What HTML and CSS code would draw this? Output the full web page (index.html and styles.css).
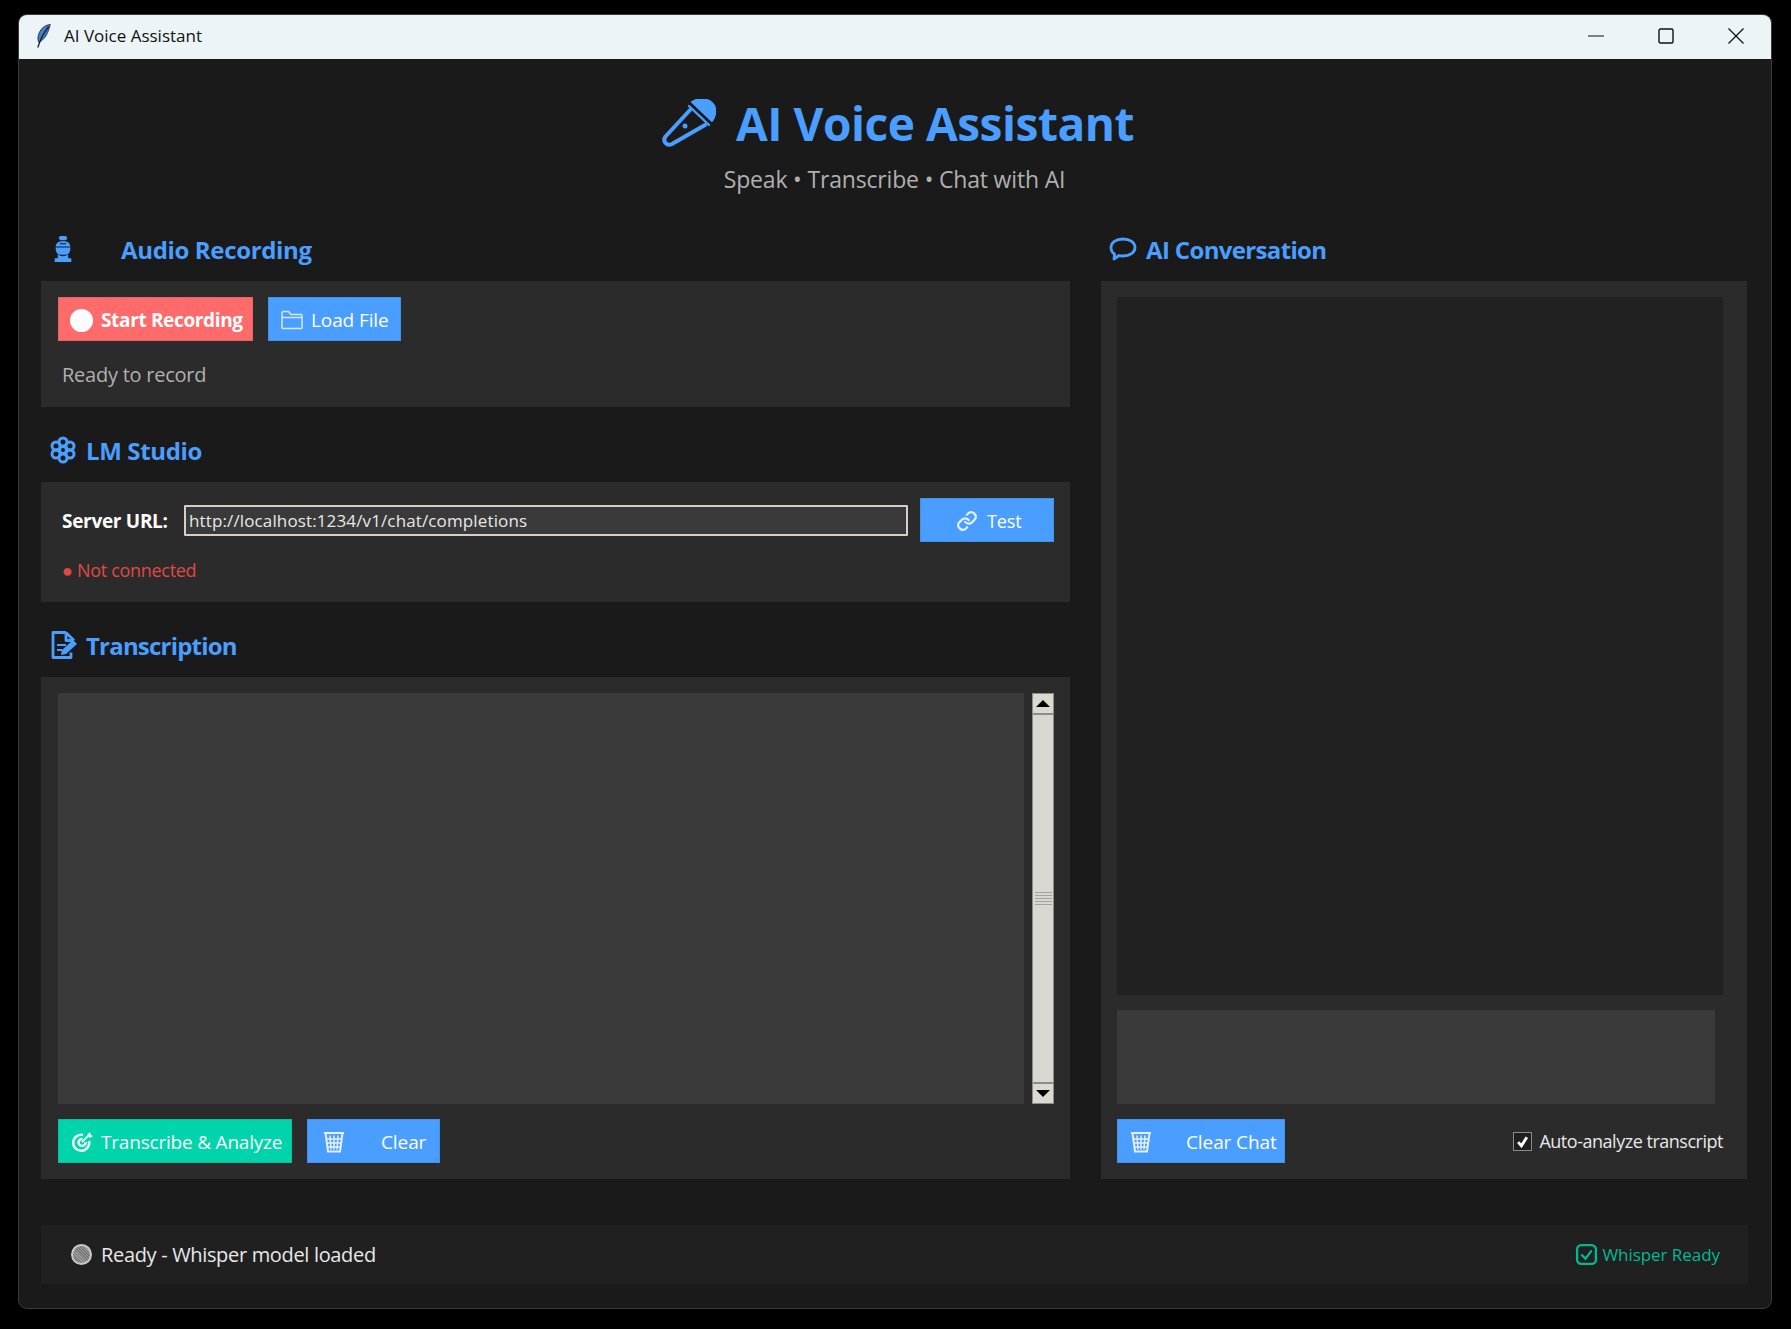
FILE: index.html
```html
<!DOCTYPE html>
<html lang="en">
<head>
  <meta charset="UTF-8" />
  <title>AI Voice Assistant</title>
  <link rel="stylesheet" href="styles.css">
</head>
<body>
  <div class="window">
    <div class="titlebar">
      <svg class="feather" viewBox="0 0 14 23">
        <path d="M13.500 .5C8 1 3.500 5 2 11c-.6 2.500-.4 4.500 .5 6.500C6 16 9 13 11 8c1-2.500 2-5 2.500-7.500z" fill="#3f7fc4" stroke="#1c2a38" stroke-width=".8"/>
        <path d="M12 2.500C8 7 5 12 1.500 22.500" fill="none" stroke="#10161c" stroke-width="1.200"/>
      </svg>
      <span class="titlebar-text">AI Voice Assistant</span>
      <div class="window-controls">
        <svg viewBox="0 0 16 16"><path d="M0 8h16" stroke="#111" stroke-width="1.200"/></svg>
        <svg viewBox="0 0 16 16"><rect x="1" y="1" width="14" height="14" rx="1.500" fill="none" stroke="#111" stroke-width="1.400"/></svg>
        <svg viewBox="0 0 16 16"><path d="M.5 .5l15 15M15.500 .5l-15 15" stroke="#111" stroke-width="1.300"/></svg>
      </div>
    </div>

    <div class="content">
      <header class="app-header">
        <h1>
          <svg class="mic-large" viewBox="0 0 54 48" fill="none" stroke="#4a9eff" stroke-width="4" stroke-linejoin="round" stroke-linecap="round">
            <path d="M28 11L3.500 37.500Q1 41 3.500 44T10 45L43 26"/>
            <path d="M27 7L47 26" stroke-width="2.400"/>
            <path d="M30 3C36-1 45-1 50 4S54 16 50 22z" fill="#4a9eff" stroke-width="2"/>
            <circle cx="23" cy="27" r="2.500" fill="#4a9eff" stroke="none"/>
          </svg>
          <span>AI Voice Assistant</span>
        </h1>
        <p class="subtitle">Speak • Transcribe • Chat with AI</p>
      </header>

      <div class="columns">
        <div class="col-left">
          <h2 class="section-title title-audio">
            <svg class="icon-audio" viewBox="0 0 18 25">
              <rect x="5" y="0" width="8" height="4" rx="2" fill="#4a9eff"/>
              <rect x="2" y="5" width="14" height="13" rx="5" fill="#4a9eff"/>
              <path d="M2 10.500h14M6 7.500h6" stroke="#1a1a1a" stroke-width="1"/>
              <path d="M4 17.500q5 4 10 0v4h3v3.500H1v-3.500h3z" fill="#4a9eff"/>
            </svg>
            <span>Audio Recording</span>
          </h2>
          <section class="panel">
            <div class="button-row">
              <button class="btn btn-red">
                <span class="rec-dot"></span>
                <span>Start Recording</span>
              </button>
              <button class="btn btn-blue btn-load">
                <svg class="btn-icon" viewBox="0 0 22 20" fill="none" stroke="#d5e8ff" stroke-width="1.500"><path d="M1 3a1.500 1.500 0 0 1 1.500-1.500h5L10 4.500h9.500A1.500 1.500 0 0 1 21 6v11.500a1 1 0 0 1-1 1H2a1 1 0 0 1-1-1z M1 7.500h20"/></svg>
                <span>Load File</span>
              </button>
            </div>
            <p class="muted-line">Ready to record</p>
          </section>

          <h2 class="section-title title-next">
            <svg class="icon-title" viewBox="0 0 28 28" fill="none" stroke="#4a9eff" stroke-width="3">
              <circle cx="14" cy="6" r="4"/><circle cx="14" cy="22" r="4"/>
              <circle cx="7" cy="10" r="4"/><circle cx="21" cy="10" r="4"/>
              <circle cx="7" cy="18" r="4"/><circle cx="21" cy="18" r="4"/>
              <circle cx="14" cy="14" r="3.500"/>
            </svg>
            <span>LM Studio</span>
          </h2>
          <section class="panel panel-lm">
            <div class="url-row">
              <label class="url-label" for="serverUrl">Server URL:</label>
              <input class="url-input" id="serverUrl" type="text" value="http://localhost:1234/v1/chat/completions" readonly />
              <button class="btn btn-blue btn-test">
                <svg class="btn-icon" viewBox="0 0 24 24" fill="none" stroke="#e3f0ff" stroke-width="2.400" stroke-linecap="round"><path d="M10 13a5 5 0 0 0 7.500 .5l3-3a5 5 0 0 0-7-7l-1.700 1.700"/><path d="M14 11a5 5 0 0 0-7.500-.5l-3 3a5 5 0 0 0 7 7l1.700-1.700"/></svg>
                <span>Test</span>
              </button>
            </div>
            <p class="conn-line">● Not connected</p>
          </section>

          <h2 class="section-title title-next title-doc">
            <svg class="icon-title icon-doc" viewBox="0 0 26 28" fill="none" stroke="#4a9eff" stroke-width="2.800" stroke-linejoin="round">
              <path d="M15 1.500H2v25h18v-5M15 1.500l8 8M15 1.500v8h8" />
              <path d="M6 14h9M6 19h5" stroke-width="2.200"/>
              <path d="M10 24l1-5 11-10 4 4-11 10z" fill="#4a9eff" stroke="none"/>
            </svg>
            <span>Transcription</span>
          </h2>
          <section class="panel panel-grow">
            <div class="text-wrap">
              <textarea class="text-area" aria-label="Transcription"></textarea>
              <div class="scrollbar">
                <div class="scroll-btn"><span class="arrow-up"></span></div>
                <div class="scroll-thumb"><span class="grip"></span></div>
                <div class="scroll-btn"><span class="arrow-down"></span></div>
              </div>
            </div>
            <div class="button-row row-bottom">
              <button class="btn btn-green">
                <svg class="btn-icon" viewBox="0 0 22 22" fill="none" stroke="#e6fbf5" stroke-width="2.600"><path d="M12 4a8 8 0 1 0 6 6"/><path d="M11.500 8a3.500 3.500 0 1 0 3 3"/><path d="M11 11l7-7" stroke-width="1.800"/><path d="M16 4l3-3 1 3 2 1-3 2z" fill="#e6fbf5" stroke="none"/></svg>
                <span>Transcribe &amp; Analyze</span>
              </button>
              <button class="btn btn-blue btn-clear">
                <svg class="trash" viewBox="0 0 22 22" fill="none" stroke="#e3efff" stroke-width="1.500"><path d="M1 2h20M2.500 2l2.500 18.500h12L19.500 2" stroke-width="2"/><path d="M7 4.500l1 14M11 4.500v14M15 4.500l-1 14M3.500 8h15M4 12h14M4.500 16h13"/></svg>
                <span>Clear</span>
              </button>
            </div>
          </section>
        </div>

        <div class="col-right">
          <h2 class="section-title title-chat">
            <svg class="icon-chat" viewBox="0 0 28 24" fill="none" stroke="#4a9eff" stroke-width="2.800" stroke-linejoin="round"><path d="M14 2c7 0 12 3.500 12 8.500S21 19 14 19c-1.500 0-3 0-4-.5L5 22l.5-5C3 15.500 2 13 2 10.500 2 5.500 7 2 14 2z"/></svg>
            <span>AI Conversation</span>
          </h2>
          <section class="panel panel-grow panel-chat">
            <div class="chat-log"></div>
            <textarea class="chat-entry" aria-label="Message"></textarea>
            <div class="chat-footer">
              <button class="btn btn-blue btn-clear-chat">
                <svg class="trash" viewBox="0 0 22 22" fill="none" stroke="#e3efff" stroke-width="1.500"><path d="M1 2h20M2.500 2l2.500 18.500h12L19.500 2" stroke-width="2"/><path d="M7 4.500l1 14M11 4.500v14M15 4.500l-1 14M3.500 8h15M4 12h14M4.500 16h13"/></svg>
                <span>Clear Chat</span>
              </button>
              <label class="check-label">
                <span class="check-box">
                  <svg viewBox="0 0 12 12" fill="none" stroke="#fff" stroke-width="2.600"><path d="M2 6.500l3 3.500 5-8"/></svg>
                </span>
                <span>Auto-analyze transcript</span>
              </label>
            </div>
          </section>
        </div>
      </div>

      <footer class="status-bar">
        <div class="status-left">
          <span class="status-dot"></span>
          <span>Ready - Whisper model loaded</span>
        </div>
        <div class="status-right">
          <svg class="icon-check" viewBox="0 0 22 22" fill="none" stroke="#00b894" stroke-width="2.200"><rect x="2" y="2" width="18" height="18" rx="4"/><path d="M6 11l4 4 6-8"/></svg>
          <span>Whisper Ready</span>
        </div>
      </footer>
    </div>
  </div>
</body>
</html>
```

FILE: styles.css
```css
* {
  box-sizing: border-box;
}
body {
  font-family: "Open Sans", "Noto Sans", sans-serif;
  background: #000;
  margin: 0;
  height: 1329px;
  padding: 14px 19px 20px 18px;
  overflow: hidden;
}
h1, h2, p {
  margin: 0;
}
.window {
  height: 100%;
  display: flex;
  flex-direction: column;
  border: 1px solid #3a3a3a;
  border-radius: 9px;
  overflow: hidden;
  background: #1a1a1a;
}
.titlebar {
  height: 44px;
  flex: none;
  background: #ecf4f8;
  display: flex;
  align-items: center;
  padding: 0 0 3px 17px;
  color: #111;
}
.feather {
  width: 15px;
  height: 24px;
}
.titlebar-text {
  margin-left: 13px;
  font-size: 17px;
}
.window-controls {
  margin-left: auto;
  display: flex;
  gap: 54px;
  padding-right: 27px;
}
.window-controls svg {
  width: 16px;
  height: 16px;
}
.content {
  flex: 1;
  display: flex;
  flex-direction: column;
  padding: 0 23px 24px 22px;
  min-height: 0;
}
.app-header {
  height: 173px;
  flex: none;
  display: flex;
  flex-direction: column;
  align-items: center;
  padding-top: 38px;
}
.app-header h1 {
  display: flex;
  align-items: center;
  gap: 20px;
  padding-left: 7px;
  color: #4a9eff;
  font-size: 46px;
  line-height: 52px;
  letter-spacing: -0.47px;
  font-weight: 700;
}
.mic-large {
  width: 54px;
  height: 48px;
}
.subtitle {
  margin-top: 15px;
  color: #b0b0b0;
  font-size: 23px;
  line-height: 30px;
  letter-spacing: -0.17px;
}
.columns {
  flex: 1;
  display: grid;
  grid-template-columns: 1029px 646px;
  gap: 31px;
  min-height: 0;
}
.col-left, .col-right {
  display: flex;
  flex-direction: column;
  min-height: 0;
}
.section-title {
  height: 36px;
  flex: none;
  margin-bottom: 13px;
  padding-bottom: 2px;
  display: flex;
  align-items: center;
  color: #4a9eff;
  font-size: 24px;
  letter-spacing: -0.35px;
  font-weight: 700;
}
.title-audio {
  padding-left: 12px;
  gap: 48px;
}
.title-next {
  margin-top: 26px;
  padding-left: 8px;
  gap: 9px;
}
.title-doc {
  padding-left: 10px;
  gap: 9px;
  letter-spacing: -0.8px;
}
.title-chat {
  padding-left: 8px;
  gap: 9px;
  letter-spacing: -0.65px;
}
.icon-audio {
  width: 20px;
  height: 26px;
}
.icon-title {
  width: 28px;
  height: 28px;
}
.icon-doc {
  width: 26px;
}
.icon-chat {
  width: 28px;
  height: 24px;
}
.panel {
  background: #2b2b2b;
  padding: 16px 16px 17px 17px;
  flex: none;
}
.panel-lm {
  padding-bottom: 20px;
}
.panel-grow {
  flex: 1;
  display: flex;
  flex-direction: column;
  min-height: 0;
  padding-bottom: 16px;
}
.panel-chat {
  padding-left: 16px;
}
.button-row {
  display: flex;
  gap: 15px;
}
.btn {
  height: 44px;
  border: 1px solid rgba(0, 0, 0, 0.08);
  display: flex;
  align-items: center;
  color: #fff;
  font-family: inherit;
  font-size: 19px;
  letter-spacing: -0.1px;
  padding: 2px 0 0;
  flex: none;
}
.btn-red {
  background: #ff6b6b;
  width: 195px;
  padding-left: 11px;
  gap: 8px;
  font-weight: 700;
  letter-spacing: -0.35px;
}
.btn-blue {
  background: #4a9eff;
}
.btn-green {
  background: #00d4aa;
  width: 234px;
  padding-left: 12px;
  gap: 8px;
  letter-spacing: -0.2px;
}
.rec-dot {
  width: 23px;
  height: 23px;
  border-radius: 50%;
  background: #fff;
}
.btn-icon {
  width: 22px;
  height: 22px;
}
.btn-load {
  width: 133px;
  padding-left: 12px;
  gap: 8px;
}
.btn-test {
  width: 134px;
  margin-left: 12px;
  padding-left: 35px;
  gap: 9px;
  font-size: 18px;
}
.btn-clear {
  width: 133px;
  padding-left: 15px;
  gap: 36px;
}
.btn-clear-chat {
  width: 168px;
  padding-left: 12px;
  gap: 34px;
}
.trash {
  width: 22px;
  height: 22px;
}
.muted-line {
  margin-top: 19px;
  padding-left: 4px;
  color: #b0b0b0;
  font-size: 20px;
  line-height: 30px;
  letter-spacing: -0.25px;
}
.url-row {
  display: flex;
  align-items: center;
}
.url-label {
  padding: 2px 0 0 4px;
  width: 126px;
  color: #fff;
  font-size: 19px;
  font-weight: 700;
  letter-spacing: -0.3px;
}
.url-input {
  width: 724px;
  height: 31px;
  background: #3a3a3a;
  border: 2px solid #d4d0c8;
  border-radius: 1px;
  color: #e8e8e8;
  font-family: inherit;
  font-size: 17px;
  letter-spacing: 0.13px;
  padding: 0 3px;
}
.conn-line {
  margin-top: 16px;
  padding-left: 4px;
  color: #e04848;
  font-size: 18px;
  line-height: 24px;
  letter-spacing: -0.3px;
}
.text-wrap {
  flex: 1;
  display: flex;
  gap: 8px;
  min-height: 0;
}
.text-area, .chat-entry {
  background: #3a3a3a;
  border: 0;
  resize: none;
  outline: none;
  display: block;
}
.text-area {
  flex: 1;
}
.scrollbar {
  width: 22px;
  display: flex;
  flex-direction: column;
  background: #d9d7d1;
  border: 1px solid #8f8c84;
}
.scroll-btn {
  height: 21px;
  flex: none;
  background: #dcd9d2;
  display: flex;
  align-items: center;
  justify-content: center;
}
.scroll-btn:first-child {
  border-bottom: 2px solid #8f8c84;
}
.scroll-btn:last-child {
  border-top: 2px solid #8f8c84;
}
.arrow-up {
  border-left: 7px solid transparent;
  border-right: 7px solid transparent;
  border-bottom: 7px solid #000;
}
.arrow-down {
  border-left: 7px solid transparent;
  border-right: 7px solid transparent;
  border-top: 7px solid #000;
}
.scroll-thumb {
  flex: 1;
  display: flex;
  align-items: center;
  justify-content: center;
}
.grip {
  width: 17px;
  height: 13px;
  background: repeating-linear-gradient(#a5a299 0 1px, #d9d7d1 1px 3px);
}
.row-bottom {
  margin-top: 15px;
}
.chat-log {
  flex: 1;
  background: #212121;
  margin-right: 8px;
}
.chat-entry {
  height: 94px;
  flex: none;
  margin-top: 15px;
  margin-right: 16px;
}
.chat-footer {
  margin-top: 15px;
  display: flex;
  align-items: center;
  justify-content: space-between;
  padding-right: 8px;
}
.check-label {
  display: flex;
  align-items: center;
  gap: 7px;
  color: #e8e8e8;
  font-size: 18px;
  letter-spacing: -0.48px;
}
.check-box {
  width: 19px;
  height: 19px;
  background: #1f1f1f;
  border: 1px solid #8a8a8a;
  display: flex;
  align-items: center;
  justify-content: center;
}
.check-box svg {
  width: 13px;
  height: 13px;
}
.status-bar {
  height: 59px;
  flex: none;
  margin-top: 46px;
  background: #202020;
  display: flex;
  align-items: center;
  justify-content: space-between;
  padding: 0 28px 0 30px;
}
.status-left {
  display: flex;
  align-items: center;
  gap: 9px;
  color: #e8e8e8;
  font-size: 20px;
  letter-spacing: -0.33px;
}
.status-dot {
  width: 21px;
  height: 21px;
  border-radius: 50%;
  border: 2px solid #c8c8c8;
  background: repeating-linear-gradient(45deg, #777 0 1px, #9a9a9a 1px 2px);
}
.status-right {
  display: flex;
  align-items: center;
  gap: 4px;
  color: #00b894;
  font-size: 17px;
  letter-spacing: -0.05px;
}
.icon-check {
  width: 23px;
  height: 23px;
}
```
